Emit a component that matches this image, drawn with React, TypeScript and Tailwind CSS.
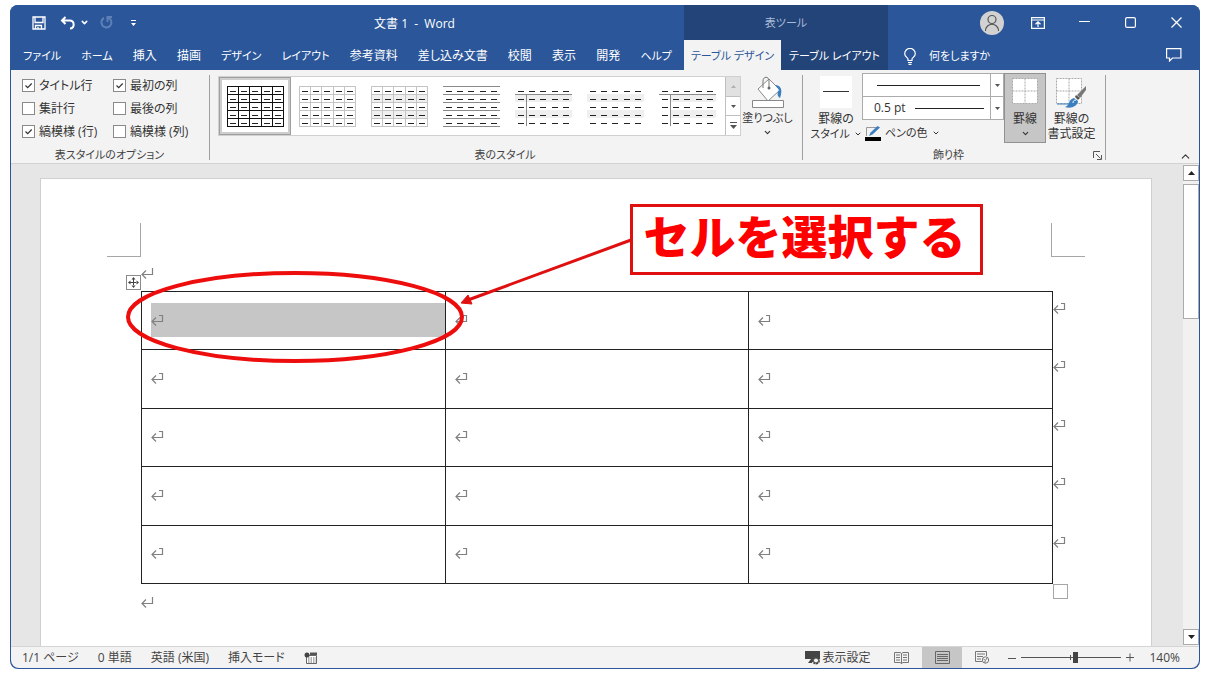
import React, { useState } from 'react';
import { ChevronDown, ChevronUp } from 'lucide-react';

const tabs = [
  { label: 'ファイル', kana: true },
  { label: 'ホーム', kana: true },
  { label: '挿入' },
  { label: '描画' },
  { label: 'デザイン', kana: true },
  { label: 'レイアウト', kana: true },
  { label: '参考資料' },
  { label: '差し込み文書' },
  { label: '校閲' },
  { label: '表示' },
  { label: '開発' },
  { label: 'ヘルプ', kana: true },
];

const styleOptions = [
  { label: 'タイトル行', checked: true },
  { label: '最初の列', checked: true },
  { label: '集計行', checked: false },
  { label: '最後の列', checked: false },
  { label: '縞模様 (行)', checked: true },
  { label: '縞模様 (列)', checked: false },
];

interface TableStyle {
  name: string;
  rows?: string;
  cols?: string;
  banded?: boolean;
  header?: boolean;
  bandStart?: number;
}

const tableStyles: TableStyle[] = [
  { name: '表 (格子)', rows: '#111', cols: '#111' },
  { name: '表 (格子) 淡色', rows: '#c4c4c4', cols: '#c4c4c4' },
  { name: '標準の表 1', rows: '#c4c4c4', cols: '#c4c4c4', banded: true },
  { name: '標準の表 2', rows: '#8a8a8a' },
  { name: '標準の表 3', banded: true, header: true },
  { name: '標準の表 4', banded: true },
  { name: '標準の表 5', banded: true, header: true, bandStart: 11 },
];

const steps = [0, 1, 2, 3, 4];
const lines = [0, 1, 2, 3, 4, 5];

const TableThumb = ({ style }: { style: TableStyle }) => (
  <svg width="57" height="41" viewBox="0 0 57 41" aria-hidden="true" shapeRendering="crispEdges">
    {style.banded &&
      [1, 3].map((r) => (
        <rect
          key={r}
          x={style.bandStart ?? 0}
          y={r * 8}
          width={57 - (style.bandStart ?? 0)}
          height="8"
          fill="#efefef"
        />
      ))}
    {style.rows &&
      lines.map((i) => (
        <path key={i} d={`M0 ${i * 8 + 0.5}H57`} stroke={style.rows} />
      ))}
    {style.cols &&
      lines.map((i) => (
        <path key={i} d={`M${Math.round(i * 11.2) + 0.5} 0V41`} stroke={style.cols} />
      ))}
    {style.header && <path d="M0 8.5H57M11.5 8V40" stroke="#8a8a8a" />}
    {steps.map((r) =>
      steps.map((c) => (
        <path
          key={`${r}-${c}`}
          d={`M${Math.round(c * 11.2) + 3} ${r * 8 + 5.5}h6`}
          stroke="#222"
        />
      ))
    )}
  </svg>
);

const ReturnMark = ({ cell = false }: { cell?: boolean }) => (
  <svg
    width="13"
    height="12"
    viewBox="0 0 13 12"
    fill="none"
    stroke="#808080"
    strokeWidth="1.200"
    aria-hidden="true"
  >
    <path d={cell ? 'M8 1.5h3.500v6H1' : 'M11.500 1v6.500H1'} />
    <path d="M5 3.500l-4 4 4 4" />
  </svg>
);

const TriangleDown = () => (
  <svg width="5" height="3" viewBox="0 0 5 3" aria-hidden="true">
    <path d="M0 0h5L2.5 3z" fill="#555" />
  </svg>
);

const QuickAccess = () => (
  <div className="flex items-center">
    <button type="button" aria-label="上書き保存">
      <svg width="14" height="14" viewBox="0 0 14 14" fill="none" stroke="#fff" strokeWidth="1.3">
        <path d="M1 1h12v12H1zM3 1v5.5h8V1M3.5 13V9.5h6V13M6 11v2" />
      </svg>
    </button>
    <button type="button" aria-label="元に戻す" className="ml-3.5">
      <svg width="16" height="14" viewBox="0 0 16 14" fill="none" stroke="#fff" strokeWidth="2">
        <path d="M5.500 1L2 4.500 5.500 8M2 4.500h7.500c5.500 0 5.500 8 .5 8" />
      </svg>
    </button>
    <button type="button" aria-label="元に戻す履歴" className="ml-1">
      <ChevronDown size={9} strokeWidth={4} />
    </button>
    <button type="button" aria-label="繰り返し" className="ml-2.5">
      <svg width="15" height="15" viewBox="0 0 15 15" fill="none" stroke="#5f80b6" strokeWidth="2">
        <path d="M13 2H8.500v5M5 3a5 5 0 1 0 6.500 1.500L9.500 2.500" />
      </svg>
    </button>
    <button type="button" aria-label="クイック アクセスのカスタマイズ" className="ml-4">
      <svg width="7" height="8" viewBox="0 0 7 8" fill="#fff">
        <path d="M1 1h5v1H1zM1 4h5L3.500 7z" />
      </svg>
    </button>
  </div>
);

const TitleBar = () => (
  <header className="flex h-[65px] shrink-0 bg-[#2b579a] text-white">
    <div className="flex w-[674px] shrink-0 flex-col">
      <div className="flex h-[35px] items-center pl-[22px]">
        <QuickAccess />
        <h1 className="flex-1 pt-0.5 pl-2 text-center text-xs whitespace-pre [font-feature-settings:normal]">
          文書 1  -  Word
        </h1>
      </div>
      <nav className="flex flex-1 items-center justify-between pt-0.5 pr-3 pl-[13px]">
        {tabs.map((tab) => (
          <button
            key={tab.label}
            type="button"
            className={tab.kana ? 'text-[11px] whitespace-nowrap' : 'whitespace-nowrap'}
          >
            {tab.label}
          </button>
        ))}
      </nav>
    </div>
    <div className="flex w-[204px] shrink-0 flex-col bg-[#234478]">
      <div className="flex h-[35px] items-center justify-center text-[11px] text-[#a9bbd8]">表ツール</div>
      <div className="flex flex-1 text-[11px]">
        <button type="button" className="w-[97px] bg-[#f3f3f3] pt-0.5 whitespace-nowrap text-[#2b579a]">
          テーブル デザイン
        </button>
        <button type="button" className="flex-1 pt-0.5 whitespace-nowrap">
          テーブル レイアウト
        </button>
      </div>
    </div>
    <div className="flex flex-1 flex-col pr-[18px] pl-4">
      <div className="flex h-[35px] items-center justify-end">
        <button type="button" aria-label="アカウント" className="mr-[27px]">
          <svg width="24" height="24" viewBox="0 0 24 24">
            <circle cx="12" cy="12" r="12" fill="#d2d2d2" />
            <g fill="none" stroke="#555" strokeWidth="1.200">
              <circle cx="12" cy="8.500" r="4" />
              <path d="M5.500 20c0-9 13-9 13 0" />
            </g>
          </svg>
        </button>
        <button type="button" aria-label="リボンの表示オプション" className="mr-[34px]">
          <svg width="14" height="12" viewBox="0 0 14 12" fill="none" stroke="#fff" strokeWidth="1.200">
            <path d="M.6.6h12.800v10.800H.6zM.6 3h12.800M7 10V5M4.500 7.200L7 4.800l2.500 2.400" />
          </svg>
        </button>
        <button type="button" aria-label="最小化" className="mr-[35px]">
          <svg width="11" height="11" viewBox="0 0 11 11" stroke="#fff" strokeWidth="1.200">
            <path d="M0 4.500h11" />
          </svg>
        </button>
        <button type="button" aria-label="最大化" className="mr-[35px]">
          <svg width="11" height="11" viewBox="0 0 11 11" fill="none" stroke="#fff" strokeWidth="1.200">
            <rect x=".6" y=".6" width="9.800" height="9.800" rx="1.500" />
          </svg>
        </button>
        <button type="button" aria-label="閉じる">
          <svg width="11" height="11" viewBox="0 0 11 11" stroke="#fff" strokeWidth="1.300">
            <path d="M.5.5l10 10M10.500.5l-10 10" />
          </svg>
        </button>
      </div>
      <div className="flex flex-1 items-center justify-between">
        <button type="button" className="flex items-center gap-[13px] pt-0.5 text-[11px]">
          <svg width="12" height="17" viewBox="0 0 12 17" fill="none" stroke="#fff" strokeWidth="1.200">
            <path d="M4 12.500V11C3.500 9.500.7 8.500.7 5.700a5.300 5.300 0 0 1 10.600 0C11.300 8.500 8.500 9.500 8 11v1.500zM4 14.500h4M4.500 16.400h3" />
          </svg>
          何をしますか
        </button>
        <button type="button" aria-label="コメント">
          <svg width="16" height="14" viewBox="0 0 16 14" fill="none" stroke="#fff" strokeWidth="1.200">
            <path d="M.6.6h14.300v9.400H6.500L3.500 13v-3H.6z" />
          </svg>
        </button>
      </div>
    </div>
  </header>
);

const OptionCheck = ({ label, checked }: { label: string; checked: boolean }) => {
  const [on, setOn] = useState(checked);

  return (
    <label className="flex items-center gap-1 whitespace-nowrap">
      <span className="grid">
        <input
          type="checkbox"
          checked={on}
          onChange={() => setOn(!on)}
          className="col-start-1 row-start-1 size-[13px] appearance-none border border-[#8a8a8a] bg-white"
        />
        {on && (
          <svg
            width="13"
            height="13"
            viewBox="0 0 13 13"
            fill="none"
            stroke="#333"
            strokeWidth="1.200"
            className="pointer-events-none col-start-1 row-start-1"
          >
            <path d="M3.500 6.500l2.200 2.200 4-4.200" />
          </svg>
        )}
      </span>
      {label}
    </label>
  );
};

const GroupLabel = ({ children }: { children: React.ReactNode }) => (
  <div className="flex h-4 items-center justify-center text-[11px] whitespace-nowrap text-[#444]">
    {children}
  </div>
);

const Separator = () => <div className="mt-[5px] mb-[3px] w-px shrink-0 bg-[#a0a0a0]" />;

const Gallery = () => {
  const [selected, setSelected] = useState(0);

  return (
    <div className="mt-[6px] flex h-[60px] border border-[#d0d0d0] bg-white">
      {tableStyles.map((style, i) => (
        <button
          key={style.name}
          type="button"
          aria-label={style.name}
          onClick={() => setSelected(i)}
          className={
            i === selected
              ? 'flex w-[72px] items-center justify-center border border-[#a0a0a0] bg-white ring-2 ring-[#cdcdcd] ring-inset'
              : 'flex w-[72px] items-center justify-center'
          }
        >
          <TableThumb style={style} />
        </button>
      ))}
      <div className="ml-0.5 flex w-[15px] flex-col divide-y divide-[#c0c0c0] border-l border-[#c0c0c0]">
        <button type="button" aria-label="上へ" className="flex flex-1 items-center justify-center bg-[#e1e1e1]">
          <svg width="5" height="3" viewBox="0 0 5 3">
            <path d="M0 3h5L2.500 0z" fill="#b0b0b0" />
          </svg>
        </button>
        <button type="button" aria-label="下へ" className="flex flex-1 items-center justify-center">
          <TriangleDown />
        </button>
        <button type="button" aria-label="その他" className="flex flex-1 items-center justify-center">
          <svg width="7" height="7" viewBox="0 0 7 7" fill="#555">
            <path d="M0 0h7v1H0zM0 3h7L3.500 7z" />
          </svg>
        </button>
      </div>
    </div>
  );
};

const BorderGrid = () => (
  <path
    d="M.5.5h25v25H.5zM13 .5v25M.5 13h25"
    fill="#fff"
    stroke="#a8a8a8"
    strokeDasharray="2 1"
  />
);

const Combo = ({ label, text, line }: { label: string; text: string; line: string }) => (
  <div className="grid h-6 border border-[#ababab] bg-white">
    <select
      aria-label={label}
      className="col-start-1 row-start-1 appearance-none pl-[11px] text-left outline-none"
    >
      <option>{text}</option>
    </select>
    <div className="pointer-events-none col-start-1 row-start-1 flex items-center">
      <svg className="flex-1" height="3" viewBox="0 0 126 3" aria-hidden="true">
        <path d={line} stroke="#222" shapeRendering="crispEdges" />
      </svg>
      <div className="flex h-full w-[13px] items-center justify-center border-l border-[#ababab]">
        <TriangleDown />
      </div>
    </div>
  </div>
);

const Ribbon = () => (
  <section className="flex h-[94px] shrink-0 border-b border-[#d2d2d2] bg-[#f3f3f3]">
    <div className="flex w-[198px] shrink-0 flex-col pt-1 pl-[11px]">
      <div className="grid grid-cols-[91px_1fr]">
        {styleOptions.map((option) => (
          <div key={option.label} className="flex h-[23px] items-center">
            <OptionCheck {...option} />
          </div>
        ))}
      </div>
      <div className="mt-auto mr-3">
        <GroupLabel>表スタイルのオプション</GroupLabel>
      </div>
    </div>
    <Separator />
    <div className="flex w-[592px] shrink-0 flex-col pl-2">
      <div className="flex">
        <Gallery />
        <button type="button" className="flex flex-1 flex-col items-center pt-1.5 pr-2">
          <svg width="34" height="34" viewBox="0 0 34 34" fill="none">
            <path d="M7 13L18 3l11 11-12 11z" fill="#fff" stroke="#888" />
            <path d="M12 12V5c0-5 6-5 6 0v7" stroke="#777" />
            <circle cx="18" cy="12" r="1.500" fill="#666" />
            <path d="M24 9c6 0 8 5 5 13-3-2-3-5-1-8z" fill="#3b7fc0" />
            <path d="M1.500 24.500h31v7h-31z" fill="#fff" stroke="#888" />
          </svg>
          <span className="text-[11px] whitespace-nowrap">塗りつぶし</span>
          <ChevronDown size={9} strokeWidth={3} className="mt-0.5" />
        </button>
      </div>
      <div className="mt-auto pr-[10px]">
        <GroupLabel>表のスタイル</GroupLabel>
      </div>
    </div>
    <Separator />
    <div className="flex w-[302px] shrink-0 flex-col pl-[7px]">
      <div className="flex pt-[3px]">
        <button type="button" className="flex w-[52px] flex-col items-center pt-[3px] leading-[15px]">
          <svg width="32" height="32" viewBox="0 0 32 32" shapeRendering="crispEdges">
            <path d="M0 0h32v32H0z" fill="#fff" />
            <path d="M3 15.500h26" stroke="#333" />
          </svg>
          <span className="mt-[3px] whitespace-nowrap">罫線の</span>
          <span className="flex items-center gap-1 text-[11px] whitespace-nowrap">
            スタイル
            <ChevronDown size={8} strokeWidth={3} />
          </span>
        </button>
        <div className="flex w-[142px] flex-col">
          <Combo label="ペンのスタイル" text=" " line="M13 1.500H116" />
          <div className="-mt-px flex flex-col">
            <Combo label="ペンの太さ" text="0.5 pt" line="M51 1.500H120" />
          </div>
          <button type="button" className="mt-[5px] flex items-center gap-1 pl-[3px] text-[11px] whitespace-nowrap">
            <svg width="16" height="15" viewBox="0 0 16 15">
              <path d="M1.500 10V1.500H12" fill="none" stroke="#999" />
              <path d="M4 10l1.500-3.500L12.500 0 15 1.500 7.500 8.500z" fill="#3b7fc0" />
              <path d="M0 11h16v4H0z" fill="#000" />
            </svg>
            ペンの色
            <ChevronDown size={8} strokeWidth={3} />
          </button>
        </div>
        <button
          type="button"
          className="flex h-[70px] w-[42px] flex-col items-center border border-[#919191] bg-[#c6c6c6] pt-1"
        >
          <svg width="26" height="26" viewBox="0 0 26 26">
            <BorderGrid />
          </svg>
          <span className="mt-[7px]">罫線</span>
          <ChevronDown size={9} strokeWidth={3} className="mt-0.5" />
        </button>
        <button type="button" className="flex flex-1 flex-col items-center pt-[5px] pr-2 leading-[15px]">
          <svg width="32" height="32" viewBox="0 0 32 32">
            <BorderGrid />
            <path d="M1 26h12" stroke="#3b7fc0" />
            <path d="M30 8v4l-6 8-3-3z" fill="#777" />
            <path d="M20 17l4 3-2 2-3-3z" fill="#555" />
            <path d="M9 29c5-1 3-8 9-9l4 3c0 5-7 8-13 6z" fill="#3b7fc0" />
            <path d="M17 25c0-2 1-3 3-3" stroke="#fff" fill="none" />
          </svg>
          <span className="mt-px whitespace-nowrap">罫線の</span>
          <span className="whitespace-nowrap">書式設定</span>
        </button>
      </div>
      <div className="mt-auto flex">
        <div className="flex-1 pr-[6px]">
          <GroupLabel>飾り枠</GroupLabel>
        </div>
        <button type="button" aria-label="線種とページ罫線と網かけの設定" className="mr-[3px]">
          <svg width="9" height="9" viewBox="0 0 9 9" fill="none" stroke="#555">
            <path d="M.5 7V.5H7M3 3l4.500 4.500M8.500 4v4.500H4" />
          </svg>
        </button>
      </div>
    </div>
    <Separator />
    <div className="flex flex-1 items-end justify-end pr-[7px]">
      <button type="button" aria-label="リボンを折りたたむ">
        <ChevronUp size={13} strokeWidth={2} />
      </button>
    </div>
  </section>
);

const Callout = () => (
  <>
    <svg
      className="pointer-events-none absolute top-0 left-0"
      width="960"
      height="200"
      viewBox="0 0 960 200"
      fill="none"
      aria-hidden="true"
    >
      <ellipse cx="254" cy="138" rx="167" ry="44" stroke="#ee0d0d" strokeWidth="4" />
      <path d="M590 61L427 121" stroke="#e01010" strokeWidth="3" />
      <path d="M420 124l7-8 4 9z" fill="#e01010" stroke="#e01010" />
    </svg>
    <p className="absolute top-[25px] left-[589px] flex h-[71px] w-[353px] items-center justify-center border-[3px] border-[#e01010] bg-white pr-1 pb-2 text-[46px] font-black whitespace-nowrap text-[#fe0000] [font-feature-settings:normal]">
      セルを選択する
    </p>
  </>
);

const DocumentTable = () => (
  <table className="h-[293px] w-full table-fixed border-collapse border border-[#222]">
    <tbody>
      {steps.map((row) => (
        <tr key={row}>
          {[0, 1, 2].map((col) => (
            <td key={col} className="relative border border-[#222] p-0">
              <div
                className={
                  row === 0 && col === 0
                    ? 'mb-0.5 ml-[9px] flex h-[34px] items-center bg-[#c6c6c6]'
                    : 'mb-0.5 ml-[9px] flex h-[34px] items-center'
                }
              >
                <ReturnMark cell />
              </div>
              {col === 2 && (
                <span className="absolute top-2.5 left-full ml-px">
                  <ReturnMark cell />
                </span>
              )}
            </td>
          ))}
        </tr>
      ))}
    </tbody>
  </table>
);

const ScrollBar = () => (
  <div className="flex w-4 shrink-0 flex-col bg-[#f1f1f1] pt-px">
    <button
      type="button"
      aria-label="上へスクロール"
      className="flex h-4 items-center justify-center border border-[#ababab] bg-white"
    >
      <svg width="7" height="4" viewBox="0 0 7 4">
        <path d="M0 4h7L3.500 0z" fill="#222" />
      </svg>
    </button>
    <div className="mt-[3px] h-[135px] border border-[#ababab] bg-white" />
    <button
      type="button"
      aria-label="下へスクロール"
      className="mt-auto mb-px flex h-4 items-center justify-center border border-[#ababab] bg-white"
    >
      <svg width="7" height="4" viewBox="0 0 7 4">
        <path d="M0 0h7L3.500 4z" fill="#222" />
      </svg>
    </button>
  </div>
);

const Workspace = () => (
  <main className="flex min-h-0 flex-1 overflow-hidden bg-[#e6e6e6]">
    <article className="relative mt-3.5 mr-[31px] ml-[29px] flex-1 border border-b-0 border-[#d0d0d0] bg-white pt-11">
      <div className="flex justify-between px-[66px]">
        <div className="size-[34px] border-r border-b border-[#a6a6a6]" />
        <div className="size-[34px] border-b border-l border-[#a6a6a6]" />
      </div>
      <div className="relative mr-[98px] ml-[100px] pt-[10px]">
        <ReturnMark />
        <button
          type="button"
          aria-label="表の移動"
          className="absolute top-[18px] -left-[15px] border border-[#8a8a8a] bg-white"
        >
          <svg width="13" height="13" viewBox="0 0 13 13" fill="#444">
            <path d="M6 3h1v3h3v1H7v3H6V7H3V6h3zM6.500 1l2 2.500h-4zM6.500 12l2-2.500h-4zM1 6.500l2.500-2v4zM12 6.500l-2.500-2v4z" />
          </svg>
        </button>
        <div className="relative mt-3">
          <DocumentTable />
          <div className="absolute top-full left-full size-[15px] border border-[#a6a6a6] bg-white" />
        </div>
        <div className="mt-3">
          <ReturnMark />
        </div>
      </div>
      <Callout />
    </article>
    <ScrollBar />
  </main>
);

const StatusBar = () => {
  const [zoom, setZoom] = useState(140);

  return (
    <footer className="flex h-[22px] shrink-0 items-center border-t border-[#d5d5d5] bg-[#f3f3f3] pr-[19px] pl-[11px] whitespace-nowrap text-[#444]">
      <div className="flex items-center gap-[19px] pt-px">
        <span>1/1 ページ</span>
        <span>0 単語</span>
        <span>英語 (米国)</span>
        <span>挿入モード</span>
        <svg width="13" height="12" viewBox="0 0 13 12">
          <path d="M2.500 3.500h10v8h-10z" fill="#fff" stroke="#666" />
          <path d="M6 .5h7v2.500H6z" fill="#555" />
          <circle cx="3" cy="3" r="2.500" fill="#444" />
          <path d="M4 6h8M4 8h8M4 10h8" stroke="#666" strokeDasharray="1.500 1" />
        </svg>
      </div>
      <div className="ml-auto flex h-full items-center">
        <button type="button" className="mr-6 flex items-center gap-px pt-px">
          <svg width="16" height="14" viewBox="0 0 16 14">
            <path d="M0 0h15v8H0zM3 12l3-4h2l-1 4z" fill="#444" />
            <circle cx="11" cy="9.500" r="3" fill="#f3f3f3" stroke="#444" strokeWidth="2" strokeDasharray="2 .6" />
            <circle cx="11" cy="9.500" r="2.500" fill="#f3f3f3" stroke="#444" />
          </svg>
          表示設定
        </button>
        <button type="button" aria-label="閲覧モード" className="mr-[13px]">
          <svg width="15" height="12" viewBox="0 0 15 12" fill="none" stroke="#777">
            <path d="M.5.5h5.500l1.500 1 1.500-1h5.500v10H9l-1.500 1-1.500-1H.5zM7.500 1.500v10M2 3h4M2 5.500h4M2 8h4M9 3h4M9 5.500h4M9 8h4" />
          </svg>
        </button>
        <button
          type="button"
          aria-label="印刷レイアウト"
          className="flex h-full w-10 items-center justify-center bg-[#c6c6c6]"
        >
          <svg width="15" height="13" viewBox="0 0 15 13" fill="none" stroke="#666">
            <path d="M.5.5h14v12H.5zM2 3.500h11M2 5.500h11M2 7.500h11M2 9.500h11" />
          </svg>
        </button>
        <button type="button" aria-label="Web レイアウト" className="ml-[13px]">
          <svg width="15" height="13" viewBox="0 0 15 13" fill="none" stroke="#777">
            <path d="M7 10.500H.5V.5h11V5M2 3h8M2 5.500h6M2 8h4" />
            <circle cx="10.500" cy="9" r="3.200" fill="#f3f3f3" />
            <path d="M8.500 8l2 1.500L12 7M10 12v-2" />
          </svg>
        </button>
        <button type="button" aria-label="縮小" className="ml-[18px]">
          <svg width="8" height="8" viewBox="0 0 8 8" stroke="#555">
            <path d="M0 4.500h8" />
          </svg>
        </button>
        <div className="mx-[5px] grid items-center">
          <svg width="100" height="9" viewBox="0 0 100 9" className="col-start-1 row-start-1" aria-hidden="true">
            <path d="M0 4.500h100M49.500 2v5" stroke="#555" shapeRendering="crispEdges" />
          </svg>
          <input
            type="range"
            aria-label="ズーム"
            min={10}
            max={250}
            value={zoom}
            onChange={(e) => setZoom(Number(e.target.value))}
            className="col-start-1 row-start-1 h-[11px] w-[100px] appearance-none bg-transparent [&::-webkit-slider-thumb]:h-[11px] [&::-webkit-slider-thumb]:w-[5px] [&::-webkit-slider-thumb]:appearance-none [&::-webkit-slider-thumb]:bg-[#444]"
          />
        </div>
        <button type="button" aria-label="拡大" className="mr-[15px]">
          <svg width="8" height="9" viewBox="0 0 8 9" stroke="#555">
            <path d="M0 4.500h8M4 .5v8" />
          </svg>
        </button>
        <span className="pt-px">{zoom}%</span>
      </div>
    </footer>
  );
};

const App = () => (
  <div className="flex h-screen flex-col bg-white pt-[5px] pr-[9px] pb-[7px] pl-[10px] font-[family-name:'Open_Sans','Noto_Sans_CJK_JP',sans-serif] text-xs leading-4 text-[#333] [font-feature-settings:'palt']">
    <div className="flex min-h-0 flex-1 flex-col overflow-hidden rounded-lg bg-[#2b579a]">
      <TitleBar />
      <div className="mx-px mb-px flex min-h-0 flex-1 flex-col overflow-hidden rounded-b-lg">
        <Ribbon />
        <Workspace />
        <StatusBar />
      </div>
    </div>
  </div>
);

export default App;
